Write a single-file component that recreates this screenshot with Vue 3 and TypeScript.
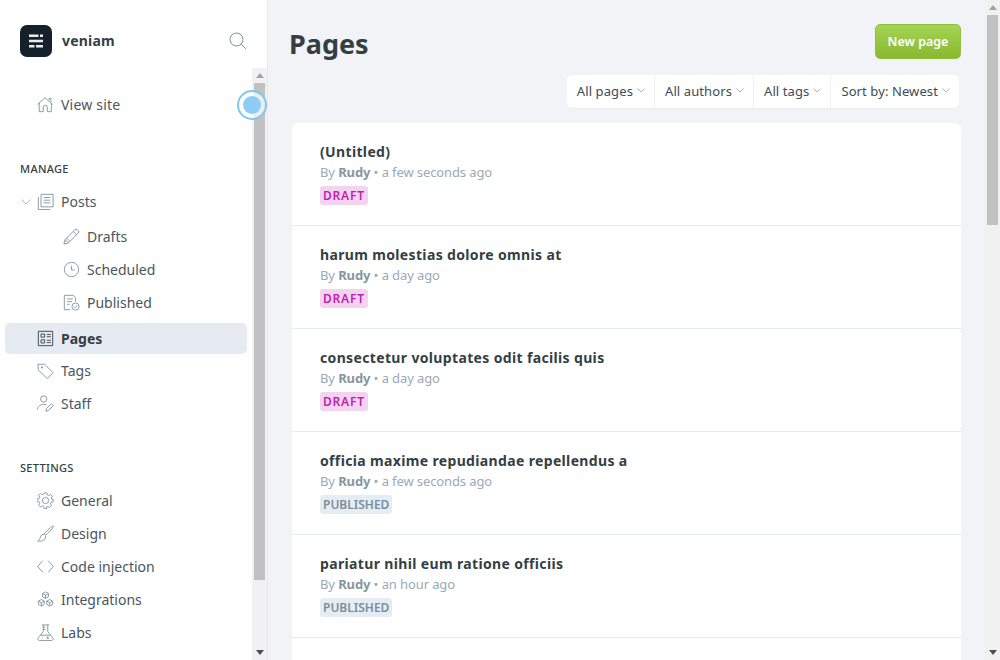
<script setup lang="ts">
interface NavItem {
  label: string
  icon: string
  active?: boolean
  sub?: boolean
  toggle?: boolean
}

interface PageRow {
  title: string
  time: string
  status: 'DRAFT' | 'PUBLISHED'
}

const icons: Record<string, string> = {
  home: 'M.5 9.500 9 2l8.500 7.500M2.500 8v9.500h4.500v-5a2.200 2.200 0 0 1 4.500 0v5H16V8M13.500 4.500V2.500H15.500v4',
  posts: 'M4.500 1.500h13.500v14H4.500zM7.500 5h7.500M7.500 8h7.500M7.500 11h7.500M1.500 4.500v14H15',
  drafts: 'M1 18l1.300-5L13.500 1.800a1.700 1.700 0 0 1 2.400 0l1.300 1.300a1.700 1.700 0 0 1 0 2.400L6 16.700zM2.300 13 6 16.700M11.500 3.800l3.700 3.700M4 11.300l3.700 3.700',
  clock: 'M9.500 1.500a8 8 0 1 0 0 16 8 8 0 0 0 0-16zM9.500 5.500v4.500h3.500',
  published: 'M8 17.500H1.500v-16h10l2.500 2.500v4.500M4.500 5.500h6.500M4.500 8.500h5.500M4.500 11.500h3M14 10a4 4 0 1 0 0 8 4 4 0 0 0 0-8zM12.200 14l1.300 1.300 2.300-2.500',
  pages: 'M1.500 1.500h16v16h-16zM4.500 4.500h4v3.500h-4zM4.500 11h4v3.500h-4zM11 5h4.500M11 7.500h4.500M11 11.500h4.500M11 14h4.500',
  tags: 'M1 2.500h7.500l9.500 9.500-6.500 6.500L1.500 9zM5 5.500h1.200v1.200H5z',
  staff: 'M7.500 1a3.500 3.500 0 1 0 0 7 3.500 3.500 0 0 0 0-7zM.5 16.500c0-3.800 3-6 7-6 1 0 2 .2 2.800.5M10 18l.6-2.800 5.400-5.400 2.200 2.200-5.400 5.400z',
  general: 'M9.500 6a3.500 3.500 0 1 0 0 7 3.500 3.500 0 0 0 0-7zM8 1h3l.5 2.300 1.700.7 2-1.200 2 2-1.200 2 .7 1.700L18 8v3l-2.300.5-.7 1.700 1.200 2-2 2-2-1.200-1.700.7L11 18.500H8l-.5-2.300-1.700-.7-2 1.200-2-2 1.200-2-.7-1.700L0 11V8l2.300-.5.7-1.700-1.200-2 2-2 2 1.200 1.700-.7z',
  design: 'M17.500 1c-2.500 1.500-7.500 6.500-9.500 9l1.500 1.500c2.500-2 7.500-7 8.500-9 .3-.8 0-1.800-.5-1.500zM8 10.500c-2.200-.2-3.700 1-4.200 3-.4 1.700-1.300 3.200-3 4.500 3.200.5 6.700-.2 8-2.500.7-1.200.9-2.200.7-3.500',
  code: 'M6.500 3 .8 9.500l5.700 6.500M12.500 3l5.700 6.500-5.700 6.500',
  integrations: 'M9.500 1l3.300 1.800v3.600L9.500 8.300 6.200 6.400V2.800zM6.200 2.800l3.300 1.900 3.300-1.900M9.500 4.700v3.600M4.800 9.500l3.300 1.800v3.600l-3.300 1.900-3.300-1.900v-3.600zM1.500 11.300l3.300 1.900 3.300-1.900M4.800 13.200v3.600M14.200 9.500l3.300 1.800v3.600l-3.300 1.900-3.300-1.900v-3.600zM10.900 11.300l3.300 1.900 3.300-1.900M14.200 13.200v3.600',
  labs: 'M5.500 1h8M7 1v7.500L1.300 15.500c-.9 1.300 0 3 1.500 3h13.400c1.500 0 2.400-1.700 1.500-3L12 8.500V1M7 3.500h2.500M7 6h2.500M3.800 12.500h11.400M5.500 15.500h1M10.500 15.500h3M12 14v3'
}

const viewSite: NavItem = { label: 'View site', icon: 'home' }

const manage: NavItem[] = [
  { label: 'Posts', icon: 'posts', toggle: true },
  { label: 'Drafts', icon: 'drafts', sub: true },
  { label: 'Scheduled', icon: 'clock', sub: true },
  { label: 'Published', icon: 'published', sub: true },
  { label: 'Pages', icon: 'pages', active: true },
  { label: 'Tags', icon: 'tags' },
  { label: 'Staff', icon: 'staff' }
]

const settings: NavItem[] = [
  { label: 'General', icon: 'general' },
  { label: 'Design', icon: 'design' },
  { label: 'Code injection', icon: 'code' },
  { label: 'Integrations', icon: 'integrations' },
  { label: 'Labs', icon: 'labs' }
]

const filters = ['All pages', 'All authors', 'All tags', 'Sort by: Newest']

const pages: PageRow[] = [
  { title: '(Untitled)', time: 'a few seconds ago', status: 'DRAFT' },
  { title: 'harum molestias dolore omnis at', time: 'a day ago', status: 'DRAFT' },
  { title: 'consectetur voluptates odit facilis quis', time: 'a day ago', status: 'DRAFT' },
  { title: 'officia maxime repudiandae repellendus a', time: 'a few seconds ago', status: 'PUBLISHED' },
  { title: 'pariatur nihil eum ratione officiis', time: 'an hour ago', status: 'PUBLISHED' }
]
</script>

<template>
  <div class="app">
    <aside class="sidebar">
      <header class="brand">
        <div class="logo">
          <svg width="16" height="14" viewBox="0 0 16 14" fill="#e8ebee">
            <path d="M1 .5h9.500V3H1zM12 .5h3V3h-3zM1 5.750h14v2.500H1zM1 11h5.500v2.500H1zM8 11h7v2.500H8z" />
          </svg>
        </div>
        <span class="brand-name">veniam</span>
        <svg class="search" width="18" height="18" viewBox="0 0 18 18" fill="none" stroke="#7d929f" stroke-width="1">
          <circle cx="7.500" cy="7.500" r="6.500" />
          <path d="M12.300 12.300 17 17" />
        </svg>
      </header>
      <div class="side-body">
        <nav class="nav">
          <a class="nav-item view-site">
            <svg class="ico" viewBox="0 0 19 19"><path :d="icons[viewSite.icon]" /></svg>
            <span>{{ viewSite.label }}</span>
          </a>

          <h4 class="nav-title manage">MANAGE</h4>
          <a
            v-for="item in manage"
            :key="item.label"
            class="nav-item"
            :class="{ sub: item.sub, active: item.active, parent: item.toggle }"
          >
            <svg v-if="item.toggle" class="toggle" width="10" height="6" viewBox="0 0 10 6" fill="none" stroke="#a9b8c2">
              <path d="M.5.500 5 5 9.500.500" />
            </svg>
            <svg class="ico" viewBox="0 0 19 19"><path :d="icons[item.icon]" /></svg>
            <span>{{ item.label }}</span>
          </a>

          <h4 class="nav-title settings">SETTINGS</h4>
          <a v-for="item in settings" :key="item.label" class="nav-item">
            <svg class="ico" viewBox="0 0 19 19"><path :d="icons[item.icon]" /></svg>
            <span>{{ item.label }}</span>
          </a>
        </nav>
        <div class="bar">
          <i class="arrow up"></i>
          <div class="thumb side-thumb"></div>
          <i class="arrow down"></i>
        </div>
        <span class="pulse"><span class="pulse-dot"></span></span>
      </div>
    </aside>

    <main class="main">
      <div class="content">
        <div class="head">
          <h1>Pages</h1>
          <button class="new-page">New page</button>
        </div>
        <div class="filters">
          <div v-for="f in filters" :key="f" class="filter">
            <span>{{ f }}</span>
            <svg width="8" height="5" viewBox="0 0 8 5" fill="none" stroke="#a9b8c2">
              <path d="M.5.500 4 4 7.500.500" />
            </svg>
          </div>
        </div>
        <section class="list">
          <article v-for="p in pages" :key="p.title" class="row">
            <h3>{{ p.title }}</h3>
            <p class="meta">By <b>Rudy</b> • {{ p.time }}</p>
            <span class="tag" :class="p.status === 'DRAFT' ? 'draft' : 'published'">{{ p.status }}</span>
          </article>
        </section>
      </div>
      <div class="bar">
        <i class="arrow up"></i>
        <div class="thumb main-thumb"></div>
        <i class="arrow down"></i>
      </div>
    </main>
  </div>
</template>

<style>
html, body {
  margin: 0;
  height: 100%;
  overflow: hidden;
}
</style>

<style scoped>
.app {
  display: flex;
  height: 660px;
  overflow: hidden;
  font-family: "Noto Sans", "Open Sans", sans-serif;
  color: #3e4b53;
  background: #f1f3f7;
}

.sidebar {
  width: 267px;
  flex: none;
  background: #fff;
  border-right: 1px solid #e5e9f0;
  display: flex;
  flex-direction: column;
}

.brand {
  height: 68px;
  flex: none;
  padding: 0 20px;
  display: flex;
  align-items: flex-start;
}

.logo {
  width: 32px;
  height: 32px;
  margin-top: 25px;
  border-radius: 7px;
  background: #15212a;
  display: flex;
  align-items: center;
  justify-content: center;
}

.brand-name {
  margin: 31px 0 0 10px;
  font-size: 14px;
  line-height: 20px;
  font-weight: 700;
  letter-spacing: 0.2px;
  color: #343f44;
}

.search {
  margin: 32px 0 0 auto;
}

.side-body {
  flex: 1;
  min-height: 0;
  display: flex;
  position: relative;
}

.nav {
  flex: 1;
  min-width: 0;
  padding: 21px 0 0 5px;
  overflow: hidden;
}

.nav-item {
  width: 242px;
  height: 31px;
  margin-bottom: 2px;
  box-sizing: border-box;
  padding-left: 32px;
  display: flex;
  align-items: center;
  gap: 7px;
  position: relative;
  border-radius: 5px;
  font-size: 14px;
  color: #4a565d;
}

.nav-item.view-site {
  letter-spacing: 0.2px;
}

.nav-item.parent {
  margin-bottom: 4px;
}

.nav-item.sub {
  padding-left: 58px;
}

.nav-item.active {
  background: #e6eaf2;
  font-weight: 700;
  color: #343f44;
  margin-top: 5px;
  margin-bottom: 1px;
  padding-bottom: 1px;
}

.nav-item.active .ico {
  stroke: #343f44;
}

.ico {
  width: 17px;
  height: 17px;
  flex: none;
  fill: none;
  stroke: #7d929f;
  stroke-width: 1;
}

.toggle {
  position: absolute;
  left: 16px;
  top: 13px;
}

.nav-title {
  margin: 0 0 0 15px;
  font-size: 11px;
  line-height: 16px;
  font-weight: 500;
  letter-spacing: 0.3px;
  color: #343f44;
}

.nav-title.manage {
  margin-top: 41px;
  margin-bottom: 9px;
}

.nav-title.settings {
  margin-top: 41px;
  margin-bottom: 9px;
}

.bar {
  width: 15px;
  flex: none;
  background: #f1f1f1;
  display: flex;
  flex-direction: column;
  align-items: center;
}

.thumb {
  width: 11px;
  background: #c1c1c1;
}

.side-thumb {
  height: 497px;
}

.main-thumb {
  height: 210px;
}

.arrow {
  width: 0;
  height: 0;
  border-left: 4px solid transparent;
  border-right: 4px solid transparent;
}

.arrow.up {
  margin: 5px 0;
  border-bottom: 5px solid #a3a3a3;
}

.arrow.down {
  margin-top: auto;
  margin-bottom: 5px;
  border-top: 5px solid #505050;
}

.pulse {
  position: absolute;
  left: 237px;
  top: 22px;
  width: 30px;
  height: 30px;
  box-sizing: border-box;
  border: 2px solid #7ec8f0;
  border-radius: 50%;
  background: rgba(255, 255, 255, 0.7);
  display: flex;
  align-items: center;
  justify-content: center;
}

.pulse-dot {
  width: 18px;
  height: 18px;
  border-radius: 50%;
  background: #8ccdf5;
}

.main {
  flex: 1;
  min-width: 0;
  display: flex;
}

.content {
  flex: 1;
  min-width: 0;
  padding: 24px 24px 0 21px;
  display: flex;
  flex-direction: column;
  overflow: hidden;
}

.head {
  display: flex;
  justify-content: space-between;
  align-items: flex-start;
}

h1 {
  margin: 0;
  font-size: 27px;
  line-height: 40px;
  font-weight: 700;
  color: #343f44;
}

.new-page {
  width: 86px;
  height: 35px;
  border: 1px solid #90c03d;
  border-radius: 5px;
  background: linear-gradient(#a3d455, #8ab92f);
  color: #fff;
  font: 600 12.5px "Noto Sans", sans-serif;
  padding: 0;
}

.filters {
  margin: 11px 2px 0 0;
  display: flex;
  justify-content: flex-end;
}

.filter {
  height: 33px;
  box-sizing: border-box;
  padding: 0 9px 2px 10px;
  display: flex;
  align-items: center;
  gap: 4px;
  background: #fff;
  font-size: 13px;
  letter-spacing: 0.1px;
  color: #3e4b53;
  border-left: 1px solid #eef0f4;
  box-shadow: 0 1px 1px rgba(0, 0, 0, 0.03);
}

.filter:first-child {
  border-left: none;
  border-radius: 5px 0 0 5px;
}

.filter:last-child {
  border-radius: 0 5px 5px 0;
}

.list {
  flex: 1;
  margin: 15px 0 0 3px;
  background: #fff;
  border-radius: 6px 6px 0 0;
}

.row {
  height: 103px;
  box-sizing: border-box;
  padding: 19px 28px 0;
  border-bottom: 1px solid #e6ebf2;
}

h3 {
  margin: 0;
  font-size: 14px;
  line-height: 20px;
  font-weight: 700;
  letter-spacing: 0.35px;
  color: #343f44;
}

.meta {
  margin: 0;
  font-size: 13px;
  line-height: 20px;
  letter-spacing: -0.11px;
  color: #9aaab5;
}

.meta b {
  color: #8696a0;
}

.tag {
  display: inline-block;
  margin-top: 4px;
  padding: 0 3px;
  border-radius: 3px;
  font-size: 12px;
  line-height: 19px;
  font-weight: 600;
}

.tag.draft {
  background: #f3d3f0;
  color: #c01fb0;
  letter-spacing: 0.8px;
}

.tag.published {
  background: #e5edf4;
  color: #7d8e99;
}
</style>
